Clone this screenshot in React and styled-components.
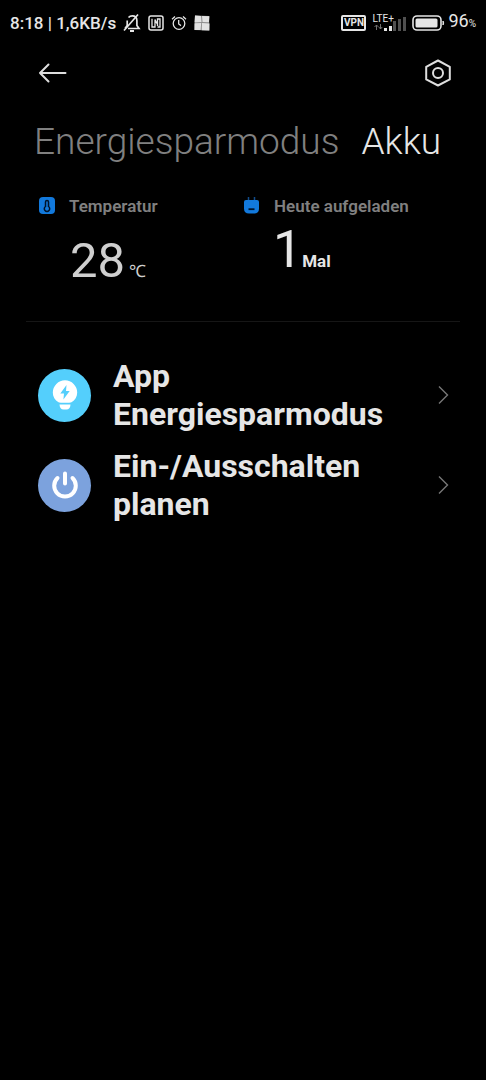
import React, { useState } from "react";
import styled, { createGlobalStyle } from "styled-components";

const GlobalStyle = createGlobalStyle`
  * {
    box-sizing: border-box;
  }

  body {
    margin: 0;
    background: #000;
    color: #e6e6e6;
    font-family: Roboto, "Noto Sans", sans-serif;
  }

  button {
    padding: 0;
    border: 0;
    background: none;
    color: inherit;
    font-family: inherit;
    text-align: left;
    cursor: pointer;
  }

  h2, p {
    margin: 0;
  }

  svg {
    display: block;
    flex: none;
  }
`;

const Screen = styled.div`
  min-height: 100vh;
  background: #000;
`;

const StatusBar = styled.div`
  display: flex;
  align-items: center;
  justify-content: space-between;
  height: 45px;
  padding: 0 10px;
`;

const StatusGroup = styled.div`
  display: flex;
  align-items: center;
  gap: ${({ $gap }) => $gap}px;
`;

const StatusText = styled.span`
  font-size: ${({ $size }) => $size}px;
  font-weight: ${({ $size }) => ($size > 17 ? 400 : 500)};
  line-height: 20px;
  white-space: nowrap;
`;

const Percent = styled.small`
  font-size: 10px;
`;

const VpnBadge = styled.span`
  width: 25px;
  border: 2px solid #e6e6e6;
  border-radius: 2px;
  font-size: 10px;
  font-weight: 700;
  line-height: 12px;
  text-align: center;
`;

const Signal = styled.div`
  display: grid;
  grid-template-columns: 20px 14px;
  align-items: end;
`;

const NetworkType = styled.div`
  font-size: 10px;
  line-height: 9px;
`;

const Toolbar = styled.header`
  display: flex;
  align-items: center;
  justify-content: space-between;
  height: 56px;
  padding: 0 32px 0 36px;
`;

const Tabs = styled.nav`
  display: flex;
  gap: 22px;
  height: 82px;
  align-items: center;
  padding: 0 34px;
`;

const Tab = styled.button`
  color: ${({ $active }) => ($active ? "#e6e6e6" : "#808080")};
  font-size: 37px;
  font-weight: 300;
  line-height: 44px;
  white-space: nowrap;
`;

const Stats = styled.section`
  display: grid;
  grid-template-columns: 205fr 217fr;
  margin: 0 26px;
  padding: 11px 0 20px 12px;
  border-bottom: 1px solid #161616;
`;

const StatLabel = styled.h2`
  display: flex;
  align-items: center;
  gap: 13px;
  height: 24px;
  color: #808080;
  font-size: 17px;
  font-weight: 600;
  white-space: nowrap;
`;

const StatValue = styled.p`
  padding: ${({ $strong }) => ($strong ? "2px 0 0 30px" : "13px 0 0 32px")};
  color: ${({ $strong }) => ($strong ? "#e6e6e6" : "#cfcfcf")};
  font-size: ${({ $strong }) => ($strong ? 52 : 49)}px;
  font-weight: 400;
  line-height: 60px;
`;

const Unit = styled.span`
  margin-left: ${({ $strong }) => ($strong ? 0 : 4)}px;
  font-size: 17px;
  font-weight: ${({ $strong }) => ($strong ? 700 : 400)};
`;

const Menu = styled.main`
  display: grid;
  gap: 14px;
  padding: 35px 36px 0 38px;
`;

const MenuRow = styled.button`
  display: flex;
  align-items: center;
  width: 100%;
`;

const MenuIcon = styled.span`
  display: grid;
  place-items: center;
  flex: none;
  width: 53px;
  height: 53px;
  border-radius: 50%;
  background: ${({ $color }) => $color};
`;

const MenuText = styled.span`
  flex: 1;
  padding: 0 22px;
  font-size: 32px;
  font-weight: 700;
  line-height: 38px;
`;

const MutedBell = () => (
  <svg width="18" height="20" viewBox="0 0 18 20" fill="none" stroke="#e6e6e6" strokeWidth="1.7">
    <path d="M5.5 4.5C6.5 3.4 7.8 2.8 9.2 2.8c3 0 4.7 2 4.7 5v4.7l2.1 3H5" />
    <path d="M4.2 7.5v5L2 15.5" />
    <path d="M1 17.5 15 1.5" />
    <path d="M7 18h4" strokeWidth="2" />
  </svg>
);

const NfcIcon = () => (
  <svg width="16" height="16" viewBox="0 0 16 16" fill="none" stroke="#e6e6e6" strokeWidth="1.5">
    <rect x="1" y="1" width="14" height="14" rx="2" />
    <path d="M4 3.8V12h3V4.5l3 6M9.5 11V4H12v8H9.5" strokeWidth="1.3" />
  </svg>
);

const AlarmIcon = () => (
  <svg width="16" height="16" viewBox="0 0 16 16" fill="none" stroke="#e6e6e6" strokeWidth="1.3">
    <circle cx="8" cy="8.5" r="5.8" />
    <path d="M7.7 5v4l2.3 1.6M1 4.2 4 1.6M15 4.2l-3-2.6" />
  </svg>
);

const WindowsIcon = () => (
  <svg width="16" height="16" viewBox="0 0 16 16">
    <path d="M1 .5 15 1l.5 14.5L.5 15z" fill="#8d8d8d" />
    <path d="M1 .5 7 1l.5 6L.5 7.5zM8 1l7.5.3-.6 6-6.4-.3zM.5 8.3 7.2 8l-.6 7L.5 15zM8 8l7.5.4-.3 7.1-7.5-.3z" fill="#e2e2e2" />
  </svg>
);

const DataArrows = () => (
  <svg width="20" height="8" viewBox="0 0 20 8">
    <path d="M4.5 7V2M2.5 4l2-2 2 2M8.5 1v5M6.8 4l1.7 2 1.7-2" fill="none" stroke="#707070" />
    <path d="M12 5h3v3h-3zM17 3h3v5h-3z" fill="#e6e6e6" />
  </svg>
);

const SignalBars = () => (
  <svg width="14" height="15" viewBox="0 0 14 15" fill="#505050">
    <path d="M1 5h3v10H1zM6 3h3v12H6zM11 1h3v14h-3z" />
  </svg>
);

const Battery = () => (
  <svg width="33" height="16" viewBox="0 0 33 16">
    <rect x="1" y="1" width="28" height="14" rx="4" fill="none" stroke="#e6e6e6" strokeWidth="1.6" />
    <rect x="3.5" y="3.5" width="22" height="9" rx="1.5" fill="#e6e6e6" />
    <path d="M31 6q1.5 2 0 4z" fill="#e6e6e6" stroke="#e6e6e6" />
  </svg>
);

const BackIcon = () => (
  <svg width="32" height="24" viewBox="0 0 32 24" fill="none" stroke="#dedede" strokeWidth="2" strokeLinecap="round" strokeLinejoin="round">
    <path d="M12.5 3.5 4 12l8.5 8.5M4 12h25.5" />
  </svg>
);

const SettingsIcon = () => (
  <svg width="32" height="32" viewBox="0 0 32 32" fill="none" stroke="#dedede" strokeWidth="2" strokeLinejoin="round">
    <path d="M16 3.5 27.8 9.8v12.6L16 28.5 4.2 22.4V9.8z" />
    <circle cx="16" cy="16" r="5" />
  </svg>
);

const ThermometerIcon = () => (
  <svg width="18" height="18" viewBox="0 0 18 18">
    <rect x="1" y="0" width="16" height="17" rx="4" fill="#1279dc" />
    <path d="M7.5 9.5V5a1.5 1.5 0 0 1 3 0v4.5a2.7 2.7 0 1 1-3 0z" fill="none" stroke="#00142b" strokeWidth="1.5" />
  </svg>
);

const PlugIcon = () => (
  <svg width="18" height="18" viewBox="0 0 18 18">
    <path d="M5.5 0v3M11.5 0v3" stroke="#104c8c" strokeWidth="1.5" />
    <path d="M3 3h11q2 0 2 2v6.5q0 5-5 5H6q-5 0-5-5V5q0-2 2-2z" fill="#1279dc" />
    <path d="M5.5 12.2h6" stroke="#00142b" strokeWidth="1.8" />
  </svg>
);

const BulbIcon = () => (
  <svg width="28" height="32" viewBox="0 0 28 32">
    <path d="M7.5 23.2C4 21.2 1.8 17.8 1.8 13.5a12.2 12.2 0 0 1 24.4 0c0 4.3-2.2 7.7-5.7 9.7-1.2.7-11.8.7-13 0z" fill="#fff" />
    <path d="M8.5 25.5h11q-.4 5-4 5h-3q-3.6 0-4-5z" fill="#fff" />
    <path d="m15.5 6-6.2 8.4H13l-.6 6.1 6.3-8.4H15z" fill="#54cffc" />
  </svg>
);

const PowerIcon = () => (
  <svg width="28" height="28" viewBox="0 0 28 28" fill="none" stroke="#fff" strokeWidth="4" strokeLinecap="round">
    <path d="M6.5 7a10.8 10.8 0 1 0 15 0M14 2.5v10" />
  </svg>
);

const Chevron = () => (
  <svg width="12" height="20" viewBox="0 0 12 20" fill="none" stroke="#777" strokeWidth="1.4">
    <path d="m1 1.5 8.5 8.5L1 18.5" />
  </svg>
);

const tabs = ["Energiesparmodus", "Akku"];

const menuItems = [
  { label: "App Energiesparmodus", color: "#54cffc", icon: <BulbIcon /> },
  { label: "Ein-/Ausschalten planen", color: "#7ca2dd", icon: <PowerIcon /> },
];

const App = () => {
  const [activeTab, setActiveTab] = useState("Akku");

  return (
    <Screen>
      <GlobalStyle />
      <StatusBar>
        <StatusGroup $gap={7}>
          <StatusText $size={17}>8:18 | 1,6KB/s</StatusText>
          <MutedBell />
          <NfcIcon />
          <AlarmIcon />
          <WindowsIcon />
        </StatusGroup>
        <StatusGroup $gap={6}>
          <VpnBadge>VPN</VpnBadge>
          <Signal>
            <div>
              <NetworkType>LTE+</NetworkType>
              <DataArrows />
            </div>
            <SignalBars />
          </Signal>
          <StatusGroup $gap={3}>
            <Battery />
            <StatusText $size={18}>
              96<Percent>%</Percent>
            </StatusText>
          </StatusGroup>
        </StatusGroup>
      </StatusBar>

      <Toolbar>
        <button aria-label="Zurück">
          <BackIcon />
        </button>
        <button aria-label="Einstellungen">
          <SettingsIcon />
        </button>
      </Toolbar>

      <Tabs>
        {tabs.map((tab) => (
          <Tab key={tab} $active={tab === activeTab} onClick={() => setActiveTab(tab)}>
            {tab}
          </Tab>
        ))}
      </Tabs>

      <Stats>
        <div>
          <StatLabel>
            <ThermometerIcon />
            Temperatur
          </StatLabel>
          <StatValue>
            28<Unit>℃</Unit>
          </StatValue>
        </div>
        <div>
          <StatLabel>
            <PlugIcon />
            Heute aufgeladen
          </StatLabel>
          <StatValue $strong>
            1<Unit $strong>Mal</Unit>
          </StatValue>
        </div>
      </Stats>

      <Menu>
        {menuItems.map((item) => (
          <MenuRow key={item.label}>
            <MenuIcon $color={item.color}>{item.icon}</MenuIcon>
            <MenuText>{item.label}</MenuText>
            <Chevron />
          </MenuRow>
        ))}
      </Menu>
    </Screen>
  );
};

export default App;
